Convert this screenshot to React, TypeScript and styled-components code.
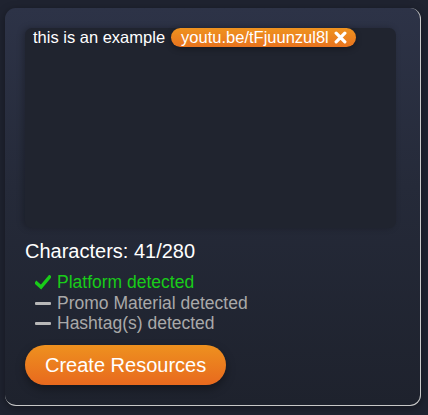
import React from "react";
import styled, { createGlobalStyle } from "styled-components";

const Global = createGlobalStyle`
  html, body { margin: 0; padding: 0; background: #1f2330; }
  body { font-family: "Liberation Sans", Arial, sans-serif; }
  #root { padding: 8px 8px 9px 5px; }
`;

const Card = styled.div`
  box-sizing: border-box;
  width: 416px;
  height: 398px;
  padding: 20px 24px 20px 20px;
  border-radius: 11px;
  background: linear-gradient(180deg, #2d3347 0%, #252a39 45%, #1e222d 100%);
  border-right: 1px solid #c8c8c8;
  border-bottom: 1px solid #c8c8c8;
  box-shadow: 0 2px 8px rgba(0, 0, 0, 0.35);
  display: flex;
  flex-direction: column;
`;

const Editor = styled.div`
  box-sizing: border-box;
  width: 371px;
  height: 200px;
  padding: 0 8px;
  border-radius: 7px;
  background: #20242f;
  box-shadow: -2px 0 6px rgba(0, 0, 0, 0.25);
  color: #ffffff;
  font-size: 16.5px;
  line-height: 19px;
`;

const Chip = styled.span`
  display: inline-flex;
  align-items: center;
  gap: 5px;
  height: 19px;
  padding: 0 9px 0 10px;
  margin-left: 6px;
  border-radius: 10px;
  background: linear-gradient(180deg, #ef931f 0%, #e8731e 100%);
  color: #fff;
  font-size: 16.5px;
  vertical-align: top;
  box-shadow: 0 2px 6px rgba(0, 0, 0, 0.3);
`;

const Close = styled.svg`
  width: 13px;
  height: 13px;
`;

const Count = styled.div`
  margin-top: 11px;
  color: #ffffff;
  font-size: 20px;
  line-height: 24px;
`;

const List = styled.ul`
  list-style: none;
  margin: 10px 0 0 10px;
  padding: 0;
  display: flex;
  flex-direction: column;
`;

const Item = styled.li<{ $ok?: boolean }>`
  display: flex;
  align-items: center;
  gap: 6px;
  height: 20.5px;
  font-size: 17.5px;
  color: ${(p) => (p.$ok ? "#19cc19" : "#a9a9a9")};
`;

const Dash = styled.span`
  display: inline-block;
  width: 16px;
  height: 3px;
  border-radius: 1px;
  background: #b8b8b8;
`;

const Button = styled.button`
  align-self: flex-start;
  margin-top: 11px;
  height: 40px;
  padding: 0 20px;
  border: none;
  border-radius: 20px;
  background: linear-gradient(180deg, #ee911f 0%, #e8691e 100%);
  color: #fff;
  font-family: "Liberation Sans", Arial, sans-serif;
  font-size: 20px;
  box-shadow: 0 4px 10px rgba(0, 0, 0, 0.35);
  cursor: pointer;
`;

const Check = () => (
  <svg width="16" height="15" viewBox="0 0 16 15">
    <path d="M1.5 8 L6 12 L14.5 2" fill="none" stroke="#19cc19" strokeWidth="3.4" strokeLinecap="square" />
  </svg>
);

export default function App() {
  return (
    <>
      <Global />
      <Card>
        <Editor>
          this is an example
          <Chip>
            youtu.be/tFjuunzul8l
            <Close viewBox="0 0 12 12">
              <path d="M2 2 L10 10 M10 2 L2 10" stroke="#fff" strokeWidth="3" strokeLinecap="round" />
            </Close>
          </Chip>
        </Editor>
        <Count>Characters: 41/280</Count>
        <List>
          <Item $ok>
            <Check />
            Platform detected
          </Item>
          <Item>
            <Dash />
            Promo Material detected
          </Item>
          <Item>
            <Dash />
            Hashtag(s) detected
          </Item>
        </List>
        <Button>Create Resources</Button>
      </Card>
    </>
  );
}
